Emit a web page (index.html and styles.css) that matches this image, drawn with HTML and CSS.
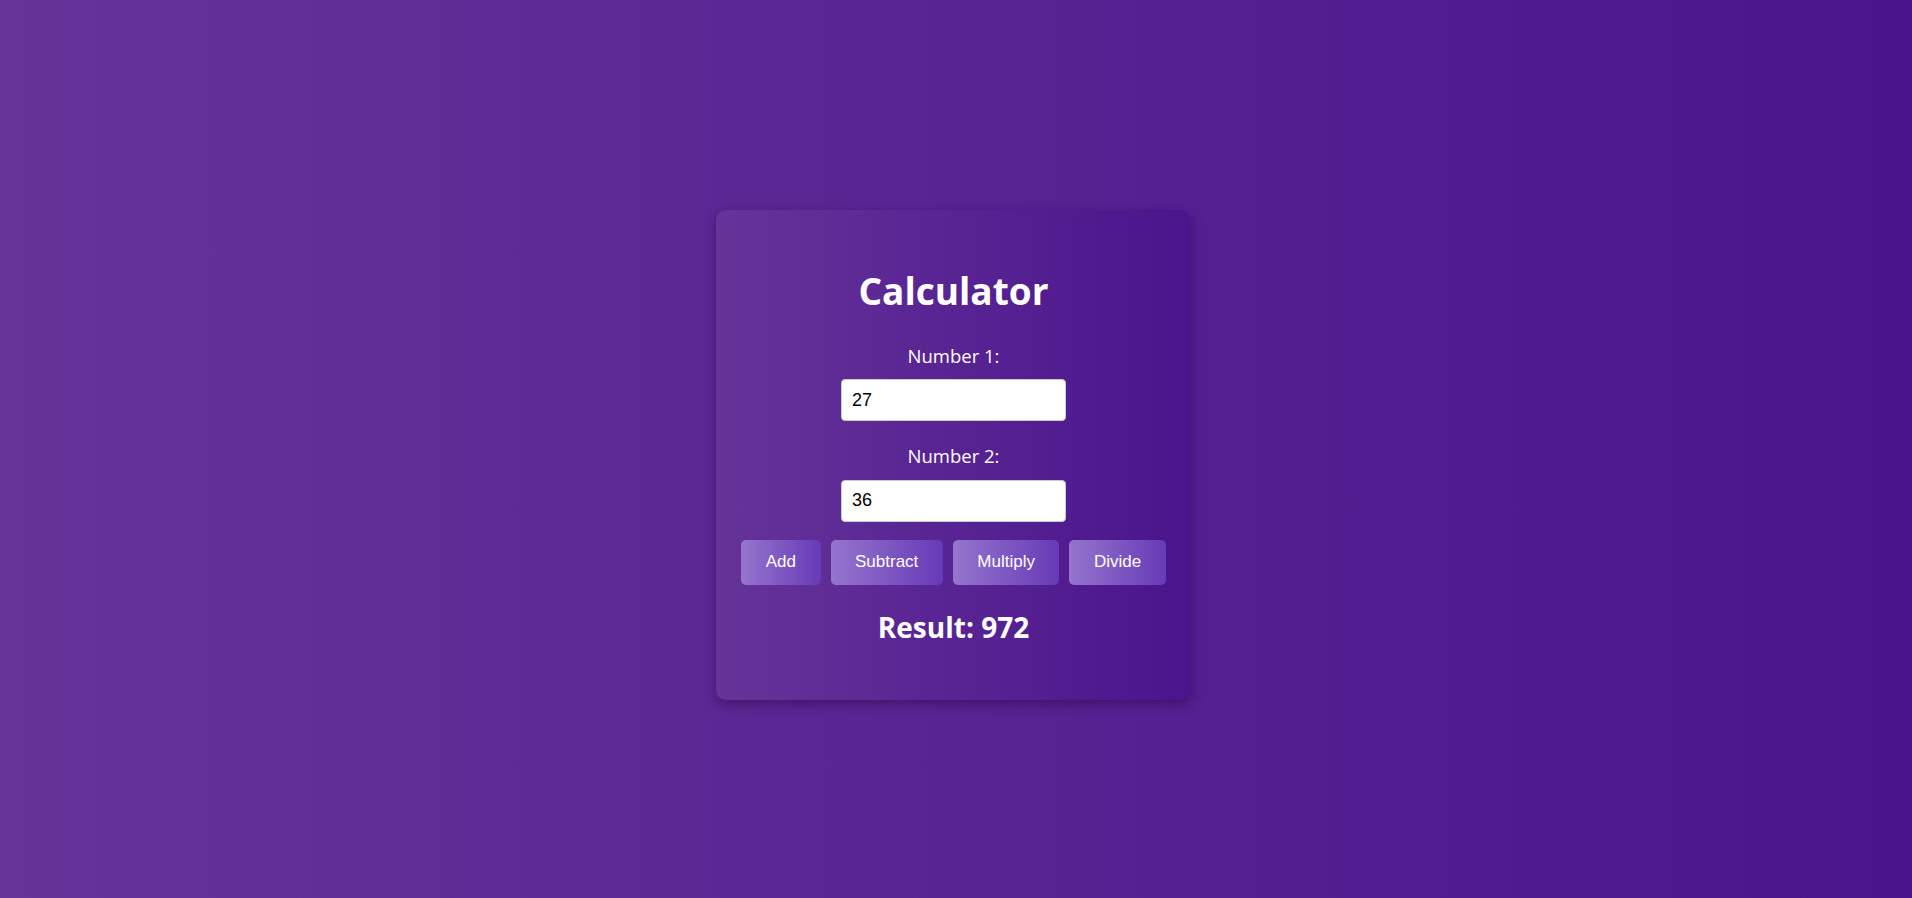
FILE: index.html
```html
<!DOCTYPE html>
<html lang="en">
<head>
<meta charset="utf-8">
<title>Calculator</title>
<link rel="stylesheet" href="styles.css">
</head>
<body>
<main class="page">
  <section class="calculator">
    <h1 class="title">Calculator</h1>
    <label class="field-label" for="num1">Number 1:</label>
    <input class="field-input" id="num1" type="text" value="27">
    <label class="field-label field-label--second" for="num2">Number 2:</label>
    <input class="field-input" id="num2" type="text" value="36">
    <div class="buttons">
      <button class="op-btn" type="button">Add</button>
      <button class="op-btn" type="button">Subtract</button>
      <button class="op-btn" type="button">Multiply</button>
      <button class="op-btn" type="button">Divide</button>
    </div>
    <p class="result">Result: 972</p>
  </section>
</main>
</body>
</html>
```

FILE: styles.css
```css
html, body {
  margin: 0;
  padding: 0;
  height: 100%;
}

body {
  background: linear-gradient(to right, #663399, #4a148c);
  font-family: "Open Sans", "Noto Sans", sans-serif;
  color: #ffffff;
}

.page {
  box-sizing: border-box;
  height: 100%;
  display: flex;
  justify-content: center;
  align-items: center;
  padding: 11px 5px 0 0;
}

.calculator {
  box-sizing: border-box;
  width: 475px;
  height: 490px;
  padding: 62px 25px 0;
  border-radius: 10px;
  background: linear-gradient(to right, #663399, #4a148c);
  box-shadow: 0 4px 12px rgba(30, 0, 60, 0.45);
  display: flex;
  flex-direction: column;
  align-items: center;
}

.title {
  margin: 0;
  font-size: 37px;
  line-height: 1;
  font-weight: 700;
}

.field-label {
  display: block;
  margin-top: 38px;
  font-size: 18.5px;
  line-height: 1;
}

.field-label--second {
  margin-top: 26px;
}

.field-input {
  box-sizing: border-box;
  width: 225px;
  height: 42px;
  margin-top: 14px;
  padding: 0 10px;
  border: 1px solid #cccccc;
  border-radius: 4px;
  background: #ffffff;
  color: #000000;
  font-family: "Liberation Sans", Arial, sans-serif;
  font-size: 18px;
  outline: none;
}

.buttons {
  display: flex;
  justify-content: center;
  gap: 10px;
  margin-top: 18px;
}

.op-btn {
  height: 45px;
  padding: 0 24.5px;
  border: none;
  border-radius: 5px;
  background: linear-gradient(to right, #9575cd, #673ab7);
  color: #ffffff;
  font-family: "Liberation Sans", Arial, sans-serif;
  font-size: 17px;
  cursor: pointer;
}

.result {
  margin: 28px 0 0;
  font-size: 28px;
  line-height: 1;
  font-weight: 700;
}
```
